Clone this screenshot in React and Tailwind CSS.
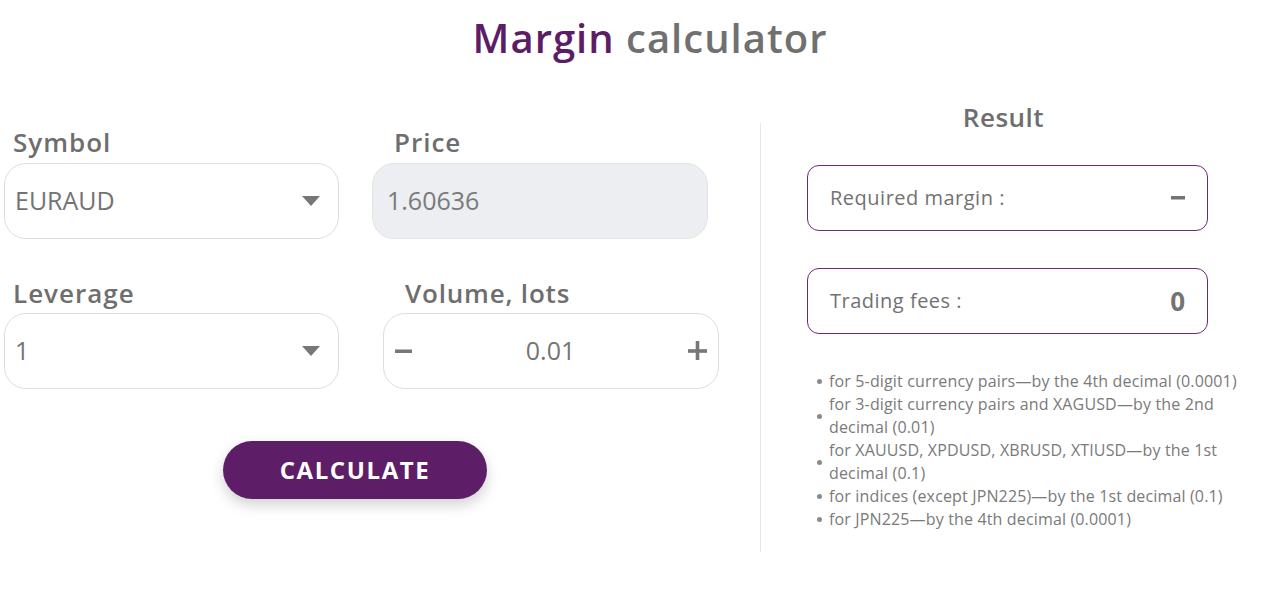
import React from "react";

const Caret = () => (
  <svg width="18" height="10" viewBox="0 0 18 10" className="shrink-0">
    <path d="M0 0 H18 L9 10 Z" fill="#777777" />
  </svg>
);

export default function App() {
  const notes = [
    ["for 5-digit currency pairs—by the 4th decimal (0.0001)"],
    ["for 3-digit currency pairs and XAGUSD—by the 2nd", "decimal (0.01)"],
    ["for XAUUSD, XPDUSD, XBRUSD, XTIUSD—by the 1st", "decimal (0.1)"],
    ["for indices (except JPN225)—by the 1st decimal (0.1)"],
    ["for JPN225—by the 4th decimal (0.0001)"],
  ];
  return (
    <div className="w-[1270px] h-[603px] bg-white overflow-hidden font-['Open_Sans',sans-serif] text-[#737373]">
      <div className="h-[100px] pt-[12px] pl-[30px]">
        <h1 className="text-center text-[40px] leading-[52px] font-semibold tracking-[1px]">
          <span className="text-[#5b1d66]">Margin</span>{" "}
          <span className="text-[#707070]">calculator</span>
        </h1>
      </div>
      <div className="flex">
        <div className="w-[760px] pl-[4px] pt-[26px]">
          <div className="flex gap-[33px]">
            <div className="w-[335px]">
              <div className="pl-[9px] text-[26px] leading-[32px] font-semibold tracking-[1px] text-[#6e6e6e] mb-[5px]">Symbol</div>
              <div className="h-[76px] rounded-[22px] border border-[#dedede] flex items-center justify-between pl-[10px] pr-[18px]">
                <span className="text-[25px]">EURAUD</span>
                <Caret />
              </div>
            </div>
            <div className="w-[336px]">
              <div className="pl-[22px] text-[26px] leading-[32px] font-semibold tracking-[1px] text-[#6e6e6e] mb-[5px]">Price</div>
              <div className="h-[76px] rounded-[22px] border border-[#e2e4e7] bg-[#eceef1] flex items-center pl-[14px]">
                <span className="text-[25px] text-[#7a7a7a]">1.60636</span>
              </div>
            </div>
          </div>
          <div className="flex gap-[44px] mt-[38px]">
            <div className="w-[335px]">
              <div className="pl-[9px] text-[26px] leading-[32px] font-semibold tracking-[1px] text-[#6e6e6e] mb-[4px]">Leverage</div>
              <div className="h-[76px] rounded-[22px] border border-[#dedede] flex items-center justify-between pl-[10px] pr-[18px]">
                <span className="text-[25px]">1</span>
                <Caret />
              </div>
            </div>
            <div className="w-[336px]">
              <div className="pl-[22px] text-[26px] leading-[32px] font-semibold tracking-[0.8px] text-[#6e6e6e] mb-[4px]">Volume, lots</div>
              <div className="h-[76px] rounded-[22px] border border-[#dedede] flex items-center justify-between pl-[11px] pr-[10px]">
                <svg width="18" height="18" viewBox="0 0 18 18">
                  <rect x="0" y="7.5" width="17" height="3.5" fill="#777777" />
                </svg>
                <span className="text-[25px] font-medium text-[#757575]">0.01</span>
                <svg width="20" height="20" viewBox="0 0 20 20">
                  <rect x="0" y="8.2" width="19" height="3.6" fill="#777777" />
                  <rect x="7.7" y="0" width="3.6" height="19" fill="#777777" />
                </svg>
              </div>
            </div>
          </div>
          <div className="mt-[52px] ml-[219px]">
            <button className="w-[264px] h-[58px] rounded-full bg-[#5d1e67] text-white text-[24px] font-bold tracking-[1.6px] shadow-[0_6px_14px_rgba(0,0,0,0.18)]">
              CALCULATE
            </button>
          </div>
        </div>
        <div className="w-px h-[429px] mt-[23px] bg-[#e6e6e6]" />
        <div className="ml-[46px] w-[450px]">
          <div className="w-[393px] text-center text-[26px] leading-[32px] font-semibold tracking-[0.5px] text-[#6e6e6e] pt-[1px]">Result</div>
          <div className="w-[401px] h-[66px] mt-[32px] rounded-[12px] border-[1.5px] border-[#6a2a72] flex items-center justify-between pl-[22px] pr-[22px]">
            <span className="text-[20px] tracking-[0.5px] text-[#727272]">Required margin :</span>
            <svg width="14" height="6" viewBox="0 0 14 6"><rect width="14" height="3.5" y="1" fill="#737373" /></svg>
          </div>
          <div className="w-[401px] h-[66px] mt-[37px] rounded-[12px] border-[1.5px] border-[#6a2a72] flex items-center justify-between pl-[22px] pr-[22px]">
            <span className="text-[20px] tracking-[0.5px] text-[#727272]">Trading fees :</span>
            <span className="text-[26px] font-bold text-[#737373]">0</span>
          </div>
          <ul className="mt-[36px] pl-[10px]">
            {notes.map((lines, i) => (
              <li key={i} className="flex items-center gap-[7px]">
                <span className="w-[5px] h-[5px] rounded-full bg-[#8a8a8a] shrink-0" />
                <span className="text-[16px] leading-[23px] tracking-[0.15px] text-[#7a7a7a] whitespace-nowrap">
                  {lines.map((l, j) => (
                    <React.Fragment key={j}>
                      {j > 0 && <br />}
                      {l}
                    </React.Fragment>
                  ))}
                </span>
              </li>
            ))}
          </ul>
        </div>
      </div>
    </div>
  );
}
